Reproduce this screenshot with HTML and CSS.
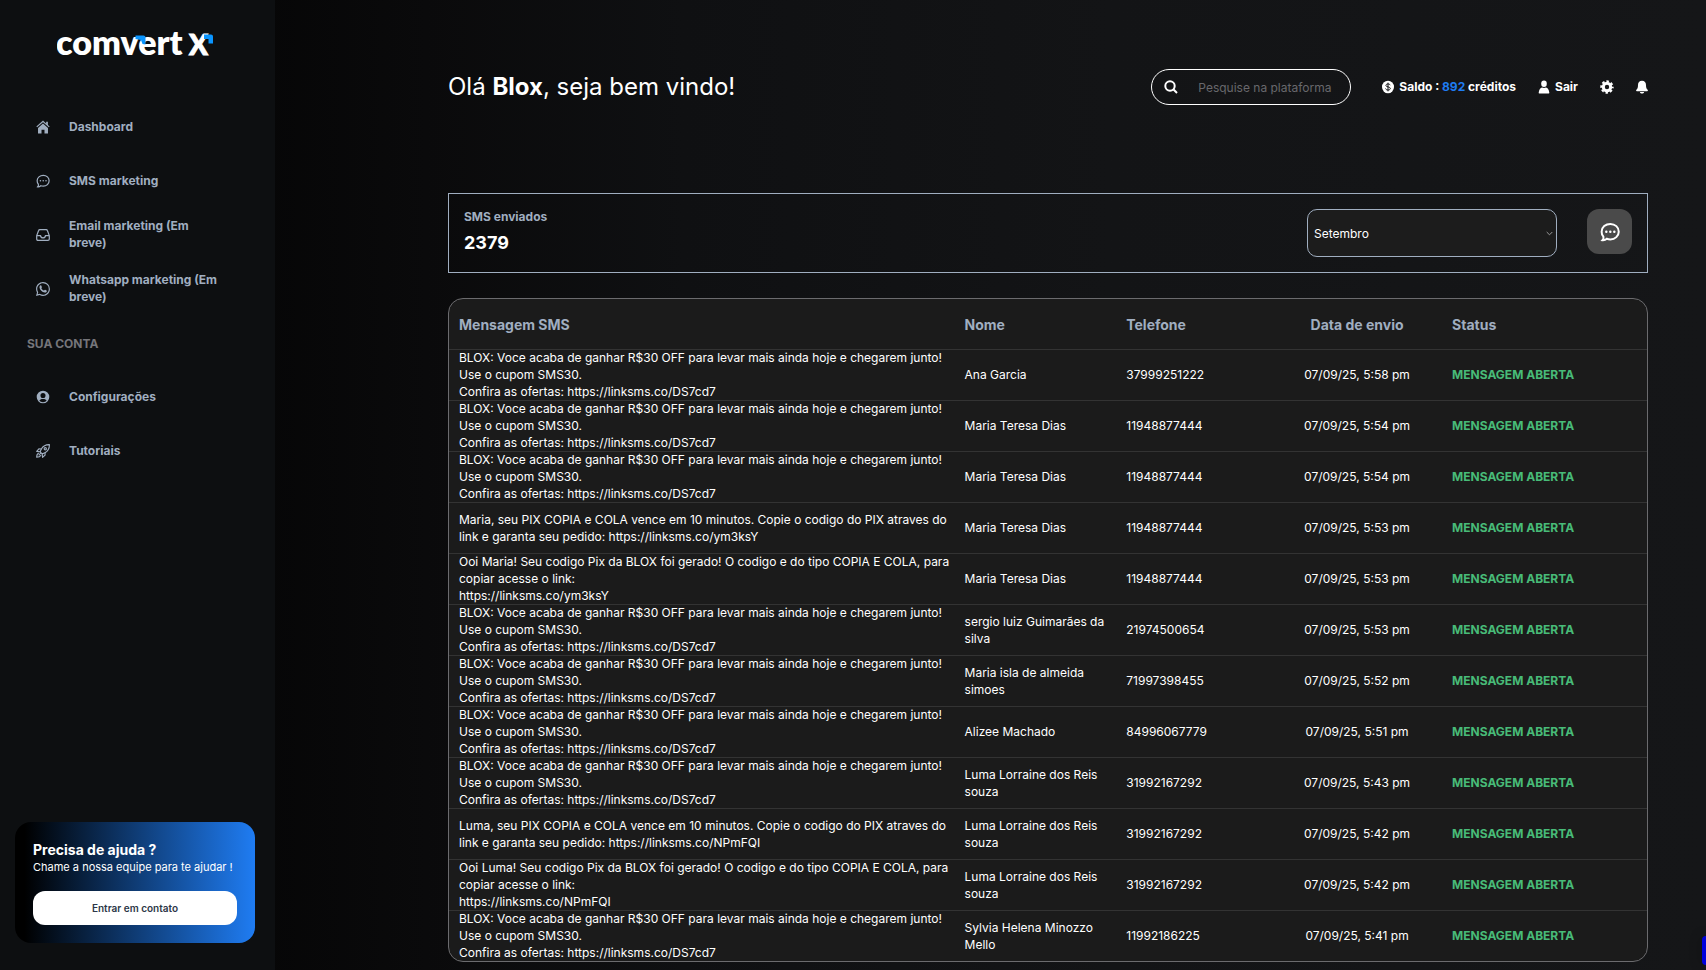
FILE: index.html
```
<!DOCTYPE html>
<html lang="pt-br">
<head>
  <meta charset="utf-8">
  <meta name="viewport" content="width=device-width, initial-scale=1">
  <title>ComvertX</title>
  <link rel="stylesheet" href="styles.css">
</head>
<body>
  <div class="page">

    <aside class="sidebar">
      <a href="#" class="logo" aria-label="comvert X">
        <svg width="170" height="46" viewBox="0 -8 170 46">
          <text class="logo-text" x="-1" y="25">comvert</text>
          <text class="logo-text logo-x" x="132" y="25">X</text>
          <path class="logo-arrow" d="M78.500 5.500h8q2 0 2 2v7l-3-.5-1.500-4-5.500-1z"/>
          <path class="logo-arrow" d="M147 4.500h7q2 0 2 2v7h-4.500V9H147z"/>
        </svg>
      </a>

      <nav class="menu">
        <a href="#" class="menu-item">
          <svg class="menu-icon" viewBox="0 0 16 16" fill="currentColor"><path d="M8 .7 .4 7.4l.9 1L8 2.500l6.700 5.900.9-1L13.600 5.600V2h-2v1.900z"/><path d="M8 4 2.300 9v6.400h4V11h3.400v4.400h4V9z"/></svg>
          <span>Dashboard</span>
        </a>
        <a href="#" class="menu-item">
          <svg class="menu-icon" viewBox="0 0 16 16" fill="none" stroke="currentColor" stroke-width="1.400"><path d="M8.300 1.500c3.800 0 6.700 2.700 6.700 6.200s-2.900 6.200-6.700 6.200c-1 0-2-.2-2.800-.5-1 .9-2.200 1.300-3.500 1.200.8-.9 1-1.900.7-2.900C1.700 10.600 1.300 9.200 1.300 7.700c0-3.500 3.200-6.200 7-6.200z"/><path stroke-width="1.700" stroke-linecap="round" d="M5 7.800h.1M8.200 7.800h.1M11.400 7.800h.1"/></svg>
          <span>SMS marketing</span>
        </a>
        <a href="#" class="menu-item">
          <svg class="menu-icon" viewBox="0 0 16 16" fill="none" stroke="currentColor" stroke-width="1.400" stroke-linejoin="round"><path d="M.8 8.700 3 2.800q.3-1 1.400-1h7.200q1.100 0 1.400 1l2.200 5.900v4q0 1.500-1.500 1.500H2.300q-1.500 0-1.500-1.500zM.8 8.700h4.400c.2 3.400 5.400 3.400 5.600 0h4.400"/></svg>
          <span>Email marketing (Em breve)</span>
        </a>
        <a href="#" class="menu-item">
          <svg class="menu-icon" viewBox="0 0 16 16" fill="currentColor"><path d="M13.601 2.326A7.850 7.850 0 0 0 7.994 0C3.627 0 .068 3.558.064 7.926c0 1.399.366 2.760 1.057 3.965L0 16l4.204-1.102a7.900 7.900 0 0 0 3.790.965h.004c4.368 0 7.926-3.558 7.930-7.930A7.900 7.900 0 0 0 13.600 2.326zM7.994 14.521a6.600 6.600 0 0 1-3.356-.92l-.24-.144-2.494.654.666-2.433-.156-.251a6.560 6.560 0 0 1-1.007-3.505c0-3.626 2.957-6.584 6.591-6.584a6.560 6.560 0 0 1 4.660 1.931 6.560 6.560 0 0 1 1.928 4.660c-.004 3.639-2.961 6.592-6.592 6.592"/><path d="M5.100 3.800c.4-.2.700-.1.900.3l.7 1.600c.1.300 0 .5-.6 1.300.8 1.400 1.700 2.200 3.100 2.800.7-.9.900-1.100 1.300-.9l1.500.7c.5.200.4.800.2 1.400-.3.700-1.400 1.100-2.200 1C7 11.500 4.300 8.800 4 6.200c-.1-1 .4-1.900 1.100-2.400z"/></svg>
          <span>Whatsapp marketing (Em breve)</span>
        </a>

        <h2 class="menu-title">SUA CONTA</h2>

        <a href="#" class="menu-item">
          <svg class="menu-icon" viewBox="0 0 16 16" fill="currentColor" fill-rule="evenodd"><path d="M8 .8a7.200 7.200 0 1 1 0 14.400A7.200 7.200 0 0 1 8 .8zM8 3.300a2.900 2.900 0 1 0 0 5.800 2.900 2.900 0 0 0 0-5.800zM3.800 12.100c1 1.200 2.500 1.900 4.200 1.900s3.200-.7 4.200-1.900c-.9-1.400-2.500-1.900-4.200-1.900s-3.300.5-4.200 1.900z"/></svg>
          <span>Configurações</span>
        </a>
        <a href="#" class="menu-item">
          <svg class="menu-icon" viewBox="0 0 16 16" fill="none" stroke="currentColor" stroke-width="1.300" stroke-linejoin="round" stroke-linecap="round"><path d="M15.300.7c-4-.2-7 1.400-9.200 5L4.700 8.900l2.400 2.400 3.200-1.400c3.600-2.200 5.200-5.200 5-9.200z"/><circle cx="10.600" cy="5.400" r="1.300"/><path d="M6.100 5.700 3.300 5.600.8 8.500l3.900.4M10.300 9.900l.1 2.800-2.900 2.500-.4-3.900M2.800 10.600C1.200 11.300.8 13 .8 15.200c2.200 0 3.900-.4 4.600-2M5.500 10.500 3.500 12.500"/></svg>
          <span>Tutoriais</span>
        </a>
      </nav>

      <div class="help">
        <h3>Precisa de ajuda ?</h3>
        <p>Chame a nossa equipe para te ajudar !</p>
        <button type="button">Entrar em contato</button>
      </div>
    </aside>

    <main class="content">
      <header class="topbar">
        <h1>Olá <b>Blox</b>, seja bem vindo!</h1>
        <label class="search">
          <svg width="14" height="14" viewBox="0 0 14 14" fill="none" stroke="currentColor" stroke-width="2"><circle cx="6" cy="6" r="4.700"/><path d="m9.300 9.300 3.700 3.700"/></svg>
          <input type="text" placeholder="Pesquise na plataforma" aria-label="Pesquise na plataforma">
        </label>
        <div class="top-links">
          <div class="top-link">
            <svg width="12" height="14" viewBox="0 0 12 14"><ellipse cx="6" cy="7" rx="6" ry="6.300" fill="#fff"/><path d="M8.200 5.200C7.900 4.300 7 4 6 4c-1.200 0-2.100.5-2.100 1.400C3.900 7.500 8.300 6.300 8.300 8.500 8.300 9.500 7.300 10 6 10s-2.200-.5-2.400-1.500M6 2.700v8.600" fill="none" stroke="#141518"/></svg>
            <span>Saldo : <span class="credits">892</span> créditos</span>
          </div>
          <a href="#" class="top-link">
            <svg width="12" height="14" viewBox="0 0 12 14" fill="currentColor"><ellipse cx="6" cy="3.700" rx="2.800" ry="3.200"/><path d="M1.300 13.500Q.5 13.500.7 12.500 1.400 8 4 7.600q2 .8 4 0 2.600.4 3.300 4.900.2 1-.6 1z"/></svg>
            <span>Sair</span>
          </a>
          <button type="button" class="icon-button" aria-label="Ajustes">
            <svg width="14" height="14" viewBox="0 0 14 14" fill="none" stroke="currentColor"><circle cx="7" cy="7" r="3.700" stroke-width="3"/><circle cx="7" cy="7" r="5.700" stroke-width="2" stroke-dasharray="2.500 1.977" stroke-dashoffset="1.250"/></svg>
          </button>
          <button type="button" class="icon-button" aria-label="Notificações">
            <svg width="12" height="14" viewBox="0 0 12 14" fill="currentColor"><path d="M6 .8c2.700 0 4 1.900 4 4.200 0 2.600.5 3.700 1.600 4.800.6.700.2 1.400-.5 1.400H.9c-.7 0-1.100-.7-.5-1.400C1.500 8.700 2 7.600 2 5 2 2.700 3.300.8 6 .8zM3.900 11.900h4.200c-.4 2-3.800 2-4.200 0z"/></svg>
          </button>
        </div>
      </header>

      <section class="stats">
        <div class="stats-text">
          <h2>SMS enviados</h2>
          <strong>2379</strong>
        </div>
        <select class="month" aria-label="Mês">
          <option>Julho</option>
          <option>Agosto</option>
          <option selected>Setembro</option>
        </select>
        <div class="stats-icon">
          <svg width="20" height="20" viewBox="0 0 16 16" fill="none" stroke="currentColor" stroke-width="1.600"><path d="M8.300 1.500c3.800 0 6.700 2.700 6.700 6.200s-2.900 6.200-6.700 6.200c-1 0-2-.2-2.800-.5-1 .9-2.200 1.300-3.500 1.200.8-.9 1-1.900.7-2.900C1.700 10.600 1.300 9.200 1.300 7.700c0-3.500 3.200-6.200 7-6.200z"/><path stroke-width="1.900" stroke-linecap="round" d="M5 7.800h.1M8.200 7.800h.1M11.400 7.800h.1"/></svg>
        </div>
      </section>

      <div class="table-box">
        <table class="messages">
          <thead>
            <tr>
              <th class="col-message">Mensagem SMS</th>
              <th class="col-name">Nome</th>
              <th class="col-phone">Telefone</th>
              <th class="col-date">Data de envio</th>
              <th>Status</th>
            </tr>
          </thead>
          <tbody>
            <tr>
              <td>BLOX: Voce acaba de ganhar R$30 OFF para levar mais ainda hoje e chegarem junto! Use o cupom SMS30.<br>Confira as ofertas: https://linksms.co/DS7cd7</td>
              <td>Ana Garcia</td>
              <td>37999251222</td>
              <td class="col-date">07/09/25, 5:58 pm</td>
              <td class="status">MENSAGEM ABERTA</td>
            </tr>
            <tr>
              <td>BLOX: Voce acaba de ganhar R$30 OFF para levar mais ainda hoje e chegarem junto! Use o cupom SMS30.<br>Confira as ofertas: https://linksms.co/DS7cd7</td>
              <td>Maria Teresa Dias</td>
              <td>11948877444</td>
              <td class="col-date">07/09/25, 5:54 pm</td>
              <td class="status">MENSAGEM ABERTA</td>
            </tr>
            <tr>
              <td>BLOX: Voce acaba de ganhar R$30 OFF para levar mais ainda hoje e chegarem junto! Use o cupom SMS30.<br>Confira as ofertas: https://linksms.co/DS7cd7</td>
              <td>Maria Teresa Dias</td>
              <td>11948877444</td>
              <td class="col-date">07/09/25, 5:54 pm</td>
              <td class="status">MENSAGEM ABERTA</td>
            </tr>
            <tr>
              <td>Maria, seu PIX COPIA e COLA vence em 10 minutos. Copie o codigo do PIX atraves do link e garanta seu pedido: https://linksms.co/ym3ksY</td>
              <td>Maria Teresa Dias</td>
              <td>11948877444</td>
              <td class="col-date">07/09/25, 5:53 pm</td>
              <td class="status">MENSAGEM ABERTA</td>
            </tr>
            <tr>
              <td>Ooi Maria! Seu codigo Pix da BLOX foi gerado! O codigo e do tipo COPIA E COLA, para copiar acesse o link:<br>https://linksms.co/ym3ksY</td>
              <td>Maria Teresa Dias</td>
              <td>11948877444</td>
              <td class="col-date">07/09/25, 5:53 pm</td>
              <td class="status">MENSAGEM ABERTA</td>
            </tr>
            <tr>
              <td>BLOX: Voce acaba de ganhar R$30 OFF para levar mais ainda hoje e chegarem junto! Use o cupom SMS30.<br>Confira as ofertas: https://linksms.co/DS7cd7</td>
              <td>sergio luiz Guimarães da silva</td>
              <td>21974500654</td>
              <td class="col-date">07/09/25, 5:53 pm</td>
              <td class="status">MENSAGEM ABERTA</td>
            </tr>
            <tr>
              <td>BLOX: Voce acaba de ganhar R$30 OFF para levar mais ainda hoje e chegarem junto! Use o cupom SMS30.<br>Confira as ofertas: https://linksms.co/DS7cd7</td>
              <td>Maria isla de almeida simoes</td>
              <td>71997398455</td>
              <td class="col-date">07/09/25, 5:52 pm</td>
              <td class="status">MENSAGEM ABERTA</td>
            </tr>
            <tr>
              <td>BLOX: Voce acaba de ganhar R$30 OFF para levar mais ainda hoje e chegarem junto! Use o cupom SMS30.<br>Confira as ofertas: https://linksms.co/DS7cd7</td>
              <td>Alizee Machado</td>
              <td>84996067779</td>
              <td class="col-date">07/09/25, 5:51 pm</td>
              <td class="status">MENSAGEM ABERTA</td>
            </tr>
            <tr>
              <td>BLOX: Voce acaba de ganhar R$30 OFF para levar mais ainda hoje e chegarem junto! Use o cupom SMS30.<br>Confira as ofertas: https://linksms.co/DS7cd7</td>
              <td>Luma Lorraine dos Reis souza</td>
              <td>31992167292</td>
              <td class="col-date">07/09/25, 5:43 pm</td>
              <td class="status">MENSAGEM ABERTA</td>
            </tr>
            <tr>
              <td>Luma, seu PIX COPIA e COLA vence em 10 minutos. Copie o codigo do PIX atraves do link e garanta seu pedido: https://linksms.co/NPmFQI</td>
              <td>Luma Lorraine dos Reis souza</td>
              <td>31992167292</td>
              <td class="col-date">07/09/25, 5:42 pm</td>
              <td class="status">MENSAGEM ABERTA</td>
            </tr>
            <tr>
              <td>Ooi Luma! Seu codigo Pix da BLOX foi gerado! O codigo e do tipo COPIA E COLA, para copiar acesse o link:<br>https://linksms.co/NPmFQI</td>
              <td>Luma Lorraine dos Reis souza</td>
              <td>31992167292</td>
              <td class="col-date">07/09/25, 5:42 pm</td>
              <td class="status">MENSAGEM ABERTA</td>
            </tr>
            <tr>
              <td>BLOX: Voce acaba de ganhar R$30 OFF para levar mais ainda hoje e chegarem junto! Use o cupom SMS30.<br>Confira as ofertas: https://linksms.co/DS7cd7</td>
              <td>Sylvia Helena Minozzo Mello</td>
              <td>11992186225</td>
              <td class="col-date">07/09/25, 5:41 pm</td>
              <td class="status">MENSAGEM ABERTA</td>
            </tr>
          </tbody>
        </table>
      </div>
    </main>
  </div>

  <div class="side-tab"></div>
</body>
</html>
```

FILE: styles.css
```
* {
  box-sizing: border-box;
}

body {
  margin: 0;
  background: linear-gradient(to right, #000 0%, #0a0a0b 25%, #0f1012 40%, #131416 65%, #151618 100%);
  color: #fff;
  font-family: Inter, sans-serif;
  font-size: 12px;
  line-height: 17px;
}

h1, h2, h3, p {
  margin: 0;
}

a {
  color: inherit;
  text-decoration: none;
}

button, input, select {
  font-family: inherit;
}

.page {
  display: flex;
  min-height: 100vh;
}

/* sidebar */
.sidebar {
  display: flex;
  flex-direction: column;
  flex: none;
  width: 275px;
  height: 100vh;
  padding: 22px 20px 27px 15px;
  background: #0d0f11;
}

.logo {
  margin-left: 42px;
}

.logo svg {
  display: block;
}

.logo-text {
  fill: #fff;
  font-family: Lato, sans-serif;
  font-size: 34px;
  font-weight: 800;
}

.logo-x {
  font-size: 28px;
  font-weight: 900;
  stroke: #fff;
}

.logo-arrow {
  fill: #0a95ff;
}

.menu {
  padding: 32px 12px 0 21px;
  color: #a0aec0;
  font-weight: 700;
}

.menu-item {
  display: flex;
  align-items: center;
  gap: 19px;
  height: 54px;
}

.menu-item span {
  width: 152px;
  padding-bottom: 2px;
}

.menu-icon {
  flex: none;
  width: 14px;
  height: 14px;
}

.menu-title {
  margin: 19px 0 18px -9px;
  color: #75757a;
  font-size: 12px;
  font-weight: 700;
}

.help {
  margin-top: auto;
  padding: 18px;
  border-radius: 16px;
  background: linear-gradient(to right, #000 4%, #1f7cf2);
}

.help h3 {
  font-size: 14px;
  line-height: 20px;
}

.help p {
  font-size: 11px;
  line-height: 15px;
}

.help button {
  display: block;
  width: 100%;
  height: 34px;
  margin-top: 16px;
  border: 0;
  border-radius: 12px;
  background: #fff;
  color: #2d3748;
  font-size: 10px;
  font-weight: 600;
}

/* content */
.content {
  flex: 1;
  min-width: 0;
  padding: 69px 58px 7px 173px;
}

.topbar {
  display: flex;
  align-items: center;
  height: 36px;
  margin-bottom: 88px;
}

.topbar h1 {
  margin-right: auto;
  font-size: 24px;
  font-weight: 400;
  line-height: 32px;
}

.search {
  display: flex;
  align-items: center;
  gap: 20px;
  width: 200px;
  height: 36px;
  padding: 0 12px;
  border: 1px solid #fff;
  border-radius: 18px;
}

.search svg {
  flex: none;
}

.search input {
  width: 100%;
  min-width: 0;
  padding: 0;
  border: 0;
  outline: 0;
  background: none;
  color: #fff;
  font-size: 12px;
}

.search input::placeholder {
  color: #68686c;
}

.top-links {
  display: flex;
  align-items: center;
  gap: 22px;
  margin-left: 31px;
}

.top-link {
  display: flex;
  align-items: center;
  gap: 5px;
  font-weight: 700;
}

.top-link > span {
  padding-bottom: 2px;
}

.credits {
  color: #1f7cf2;
}

.icon-button {
  display: flex;
  padding: 0;
  border: 0;
  background: none;
  color: #fff;
}

.stats {
  display: flex;
  align-items: flex-start;
  height: 80px;
  padding: 15px;
  border: 1px solid #a0aec0;
}

.stats-text {
  margin-right: auto;
}

.stats h2 {
  color: #a0aec0;
  font-size: 12px;
  font-weight: 700;
  line-height: 16px;
}

.stats strong {
  display: block;
  font-size: 18px;
  line-height: 36px;
}

.month {
  width: 250px;
  height: 48px;
  margin-right: 30px;
  padding: 0 6px;
  border: 1px solid #a0aec0;
  border-radius: 10px;
  appearance: none;
  background: #1c1c1c url("data:image/svg+xml,%3Csvg xmlns='http://www.w3.org/2000/svg' width='7' height='5' viewBox='0 0 7 5'%3E%3Cpath d='M.7 1l2.800 2.800L6.300 1' fill='none' stroke='%23999'/%3E%3C/svg%3E") no-repeat right 3px center;
  color: #fff;
  font-size: 12px;
}

.stats-icon {
  display: flex;
  align-items: center;
  justify-content: center;
  width: 45px;
  height: 45px;
  border-radius: 12px;
  background: #4a4a4a;
}

.table-box {
  margin-top: 25px;
  border: 1px solid #6b6b6e;
  border-radius: 15px;
  background: #1b1b1b;
  overflow: hidden;
}

.messages {
  width: 100%;
  border-collapse: collapse;
  table-layout: fixed;
}

.messages th,
.messages td {
  height: 51px;
  padding: 0 0 0 10px;
  text-align: left;
}

.messages td {
  box-shadow: inset 0 1px #333;
}

.messages th {
  height: 50px;
  color: #a0aec0;
  font-size: 14px;
  font-weight: 700;
}

.col-message {
  width: 42.2%;
}

.col-name {
  width: 13.5%;
}

.col-phone {
  width: 13%;
}

.col-date {
  width: 14.2%;
}

.messages .col-date {
  padding: 0;
  text-align: center;
}

.messages .status {
  color: #48bb78;
  font-weight: 700;
}

.side-tab {
  position: fixed;
  right: 0;
  bottom: 5px;
  width: 4px;
  height: 29px;
  border-radius: 4px 0 0 4px;
  background: #0000dc;
  box-shadow: 0 0 12px rgba(0, 0, 0, .4);
}
```
